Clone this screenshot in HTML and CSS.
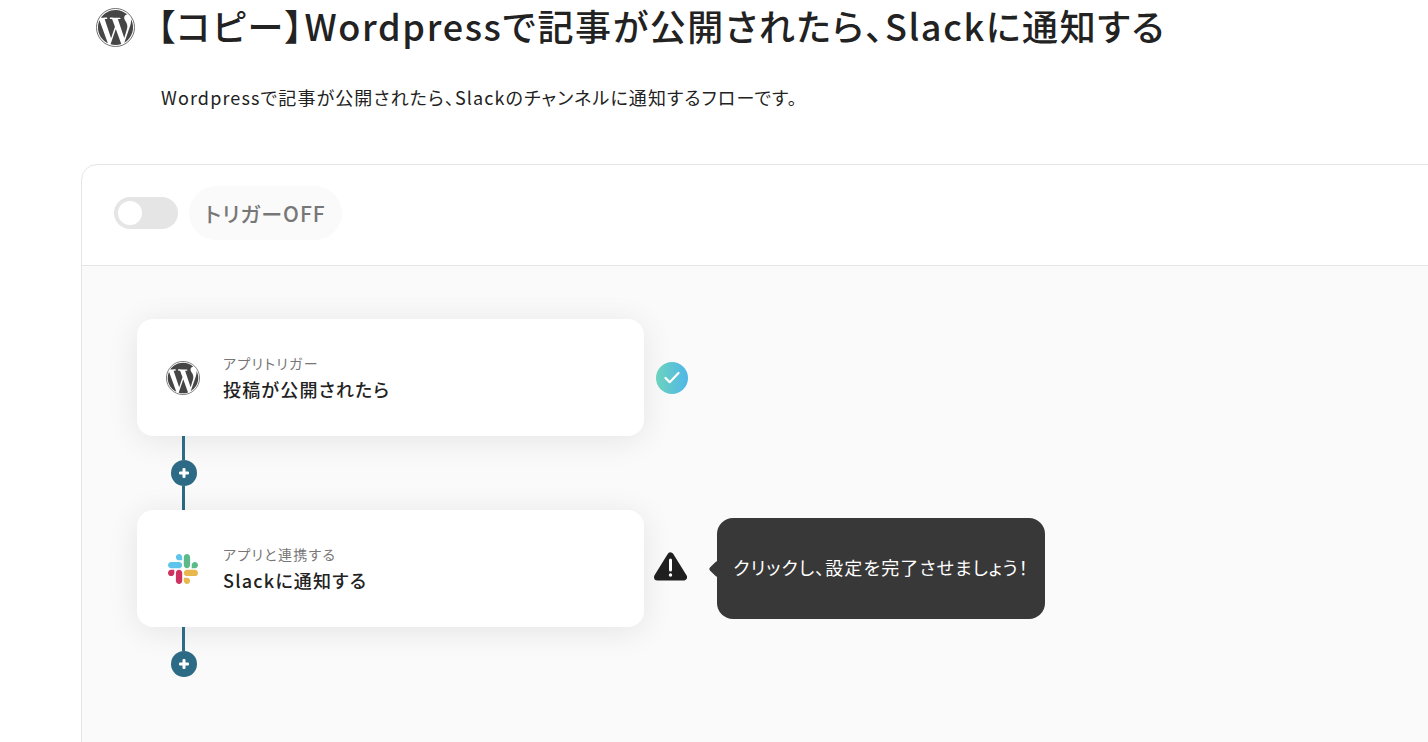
FILE: index.html
```html
<!DOCTYPE html>
<html lang="ja">
<head>
  <title>【コピー】Wordpressで記事が公開されたら、Slackに通知する</title>
  <meta charset="utf-8">
  <meta name="viewport" content="width=device-width, initial-scale=1">
  <link rel="stylesheet" href="styles.css">
</head>
<body>
  <svg class="sprite" width="0" height="0">
    <symbol id="icon-wordpress" viewBox="0 0 24 24">
      <circle cx="12" cy="12" r="11.7" fill="none" stroke="#6e6e6e" stroke-width="0.6"/>
      <path fill="#464646" d="M21.469 6.825c.84 1.537 1.318 3.3 1.318 5.175 0 3.979-2.156 7.456-5.363 9.325l3.295-9.527c.615-1.54.82-2.771.82-3.864 0-.405-.026-.78-.07-1.11m-7.981.105c.647-.03 1.232-.105 1.232-.105.582-.075.514-.93-.067-.899 0 0-1.755.135-2.88.135-1.064 0-2.85-.15-2.85-.15-.585-.03-.661.855-.075.885 0 0 .54.061 1.125.09l1.68 4.605-2.37 7.08L5.354 6.9c.649-.03 1.234-.1 1.234-.1.585-.075.516-.93-.065-.896 0 0-1.746.138-2.874.138-.2 0-.438-.008-.69-.015C4.911 3.15 8.235 1.215 12 1.215c2.809 0 5.365 1.072 7.286 2.833-.046-.003-.091-.009-.141-.009-1.06 0-1.812.923-1.812 1.914 0 .89.513 1.643 1.06 2.531.411.72.89 1.643.89 2.977 0 .915-.354 1.994-.821 3.479l-1.075 3.585-3.9-11.61.001.014zM12 22.784c-1.059 0-2.081-.153-3.048-.437l3.237-9.406 3.315 9.087c.024.053.05.101.078.149-1.12.393-2.325.609-3.582.609M1.211 12c0-1.564.336-3.05.935-4.39L7.29 21.709C3.694 19.96 1.212 16.271 1.211 12"/>
    </symbol>
  </svg>

  <header class="page-head">
    <div class="title-row">
      <svg class="title-icon"><use href="#icon-wordpress"/></svg>
      <h1 class="title">【コピー】Wordpressで記事が公開されたら、Slackに通知する</h1>
    </div>
    <p class="description">Wordpressで記事が公開されたら、Slackのチャンネルに通知するフローです。</p>
  </header>

  <main class="panel">
    <div class="panel-head">
      <span class="toggle"><span class="toggle-knob"></span></span>
      <span class="trigger-label">トリガーOFF</span>
    </div>

    <div class="flow">
      <div class="step">
        <div class="step-card">
          <svg class="step-icon"><use href="#icon-wordpress"/></svg>
          <div>
            <div class="step-kind">アプリトリガー</div>
            <div class="step-name">投稿が公開されたら</div>
          </div>
        </div>
        <span class="status-check">
          <svg width="18" height="15" viewBox="0 0 18 15"><path d="M2.5 8l4.2 4.2L15.5 3" fill="none" stroke="#fff" stroke-width="2.2" stroke-linecap="round" stroke-linejoin="round"/></svg>
        </span>
      </div>

      <div class="connector">
        <span class="line"></span>
        <span class="plus"></span>
        <span class="line"></span>
      </div>

      <div class="step">
        <div class="step-card">
          <svg class="step-icon step-icon-slack" viewBox="0 0 122.8 122.8">
            <path fill="#d0325f" d="M25.8 77.6c0 7.1-5.8 12.9-12.9 12.9S0 84.7 0 77.6s5.8-12.9 12.9-12.9h12.9v12.9zM32.3 77.6c0-7.1 5.8-12.9 12.9-12.9s12.9 5.8 12.9 12.9v32.3c0 7.1-5.8 12.9-12.9 12.9s-12.9-5.8-12.9-12.9V77.6z"/>
            <path fill="#5fc4ec" d="M45.2 25.8c-7.1 0-12.9-5.8-12.9-12.9S38.1 0 45.2 0s12.9 5.8 12.9 12.9v12.9H45.2zM45.2 32.3c7.1 0 12.9 5.8 12.9 12.9s-5.8 12.9-12.9 12.9H12.9C5.8 58.1 0 52.3 0 45.2s5.8-12.9 12.9-12.9h32.3z"/>
            <path fill="#5cb98a" d="M97 45.2c0-7.1 5.8-12.9 12.9-12.9s12.9 5.8 12.9 12.9-5.8 12.9-12.9 12.9H97V45.2zM90.5 45.2c0 7.1-5.8 12.9-12.9 12.9s-12.9-5.8-12.9-12.9V12.9C64.7 5.8 70.5 0 77.6 0s12.9 5.8 12.9 12.9v32.3z"/>
            <path fill="#e8b84e" d="M77.6 97c7.1 0 12.9 5.8 12.9 12.9s-5.8 12.9-12.9 12.9-12.9-5.8-12.9-12.9V97h12.9zM77.6 90.5c-7.1 0-12.9-5.8-12.9-12.9s5.8-12.9 12.9-12.9h32.3c7.1 0 12.9 5.8 12.9 12.9s-5.8 12.9-12.9 12.9H77.6z"/>
          </svg>
          <div>
            <div class="step-kind">アプリと連携する</div>
            <div class="step-name">Slackに通知する</div>
          </div>
        </div>
        <svg class="status-warn" width="33" height="29" viewBox="0 0 33 29">
          <path d="M16.5 4L29.5 25H3.5z" fill="#1f1f1f" stroke="#1f1f1f" stroke-width="7" stroke-linejoin="round"/>
          <rect x="15" y="6.5" width="3" height="13" rx="1.5" fill="#fff"/>
          <circle cx="16.5" cy="23" r="1.7" fill="#fff"/>
        </svg>
        <div class="tooltip">クリックし、設定を完了させましょう！</div>
      </div>

      <div class="connector">
        <span class="line"></span>
        <span class="plus"></span>
      </div>
    </div>
  </main>
</body>
</html>
```

FILE: styles.css
```css
*, *::before, *::after {
  margin: 0;
  padding: 0;
  box-sizing: border-box;
}

html, body {
  height: 100%;
  overflow: hidden;
}

body {
  background-color: #FFFFFF;
  color: #222222;
  font-family: "Noto Sans CJK JP", "Noto Sans", sans-serif;
  font-feature-settings: "palt";
}

.sprite {
  display: block;
}

.page-head {
  height: 164px;
  padding: 8px 0 0 96px;
}

.title-row {
  display: flex;
  align-items: center;
  gap: 22px;
}

.title-icon {
  flex: none;
  width: 39px;
  height: 39px;
}

.title {
  margin-top: -5px;
  font-size: 36px;
  font-weight: 500;
  letter-spacing: 1.65px;
  line-height: 40px;
  white-space: nowrap;
}

.description {
  margin: 36px 0 0 65px;
  font-size: 18px;
  letter-spacing: 1.12px;
  line-height: 28px;
}

.panel {
  width: 1400px;
  margin-left: 81px;
  border: 1px solid #E5E5E5;
  border-radius: 16px 16px 0 0;
  background-color: #FFFFFF;
}

.panel-head {
  display: flex;
  align-items: center;
  gap: 11px;
  height: 101px;
  padding: 0 0 4px 32px;
  border-bottom: 1px solid #E5E5E5;
}

.toggle {
  display: flex;
  align-items: center;
  width: 64px;
  height: 32px;
  padding-left: 4px;
  border-radius: 16px;
  background-color: #E5E5E5;
}

.toggle-knob {
  width: 24px;
  height: 24px;
  border-radius: 50%;
  background-color: #FFFFFF;
}

.trigger-label {
  display: flex;
  align-items: center;
  height: 54px;
  padding: 0 16px;
  border-radius: 27px;
  background-color: #FAFAFA;
  color: #777777;
  font-size: 21px;
  font-weight: 500;
  letter-spacing: 1px;
}

.flow {
  height: 476px;
  padding: 53px 55px;
  background-color: #FAFAFA;
}

.step {
  display: flex;
  align-items: center;
}

.step-card {
  display: flex;
  flex: none;
  align-items: center;
  gap: 23px;
  width: 507px;
  height: 117px;
  padding-left: 29px;
  border-radius: 16px;
  background-color: #FFFFFF;
  box-shadow: 0 4px 32px rgba(0, 0, 0, 0.09);
}

.step-icon {
  flex: none;
  width: 34px;
  height: 34px;
}

.step-icon-slack {
  width: 30px;
  height: 30px;
  margin: 0 2px;
}

.step-kind {
  color: #777777;
  font-size: 14px;
  letter-spacing: 1.3px;
  line-height: 20px;
}

.step-name {
  margin-top: 2px;
  font-size: 18px;
  font-weight: 500;
  letter-spacing: 1.2px;
  line-height: 28px;
}

.status-check {
  display: flex;
  align-items: center;
  justify-content: center;
  width: 32px;
  height: 32px;
  margin-left: 12px;
  border-radius: 50%;
  background: linear-gradient(90deg, #6CD3BE, #4FB6E8);
}

.status-warn {
  flex: none;
  margin: 0 0 5px 10px;
}

.tooltip {
  position: relative;
  display: flex;
  align-items: center;
  justify-content: center;
  width: 328px;
  height: 101px;
  margin-left: 30px;
  padding-bottom: 3px;
  border-radius: 16px;
  background-color: #383838;
  color: #FFFFFF;
  font-size: 18px;
  letter-spacing: 1.1px;
  white-space: nowrap;
}

.tooltip::before {
  content: "";
  position: absolute;
  top: 50%;
  left: -6px;
  width: 12px;
  height: 12px;
  border-radius: 2px;
  background-color: #383838;
  transform: translateY(-50%) rotate(45deg);
}

.connector {
  display: flex;
  flex-direction: column;
  align-items: center;
  width: 26px;
  margin-left: 34px;
}

.line {
  width: 3px;
  height: 24px;
  margin-right: 1px;
  background-color: #2D6A85;
}

.plus {
  position: relative;
  width: 26px;
  height: 26px;
  border-radius: 50%;
  background-color: #2D6A85;
}

.plus::before, .plus::after {
  content: "";
  position: absolute;
  top: 50%;
  left: 50%;
  border-radius: 1px;
  background-color: #FFFFFF;
  transform: translate(-50%, -50%);
}

.plus::before {
  width: 10px;
  height: 3px;
}

.plus::after {
  width: 3px;
  height: 10px;
}
```
